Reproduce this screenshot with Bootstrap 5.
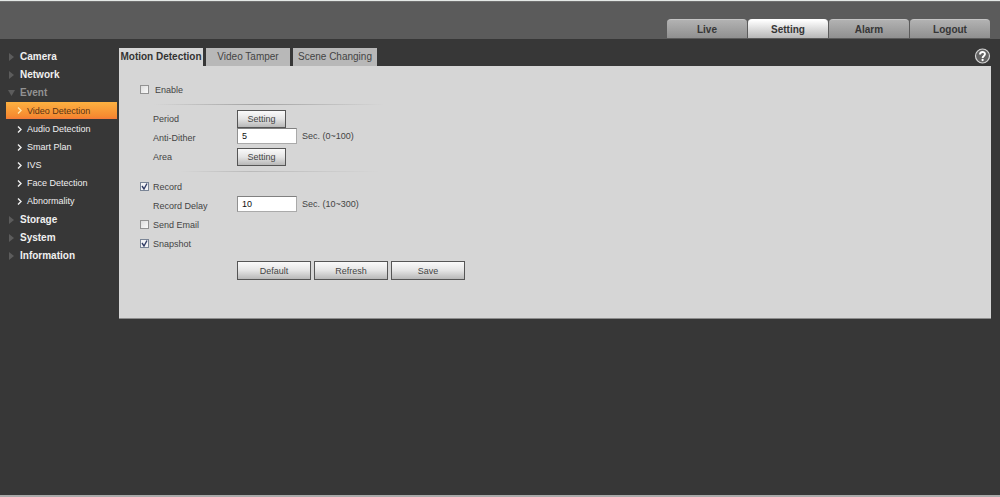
<!DOCTYPE html>
<html lang="en">
<head>
<meta charset="utf-8">
<meta name="viewport" content="width=device-width, initial-scale=1">
<title>Video Detection - Setting</title>
<link href="https://cdn.jsdelivr.net/npm/bootstrap@5.3.0/dist/css/bootstrap.min.css" rel="stylesheet">
<style>
body{background:#373737;color:#444;font:9px/12px "Liberation Sans",Arial,sans-serif;border-top:1px solid #e4e8e6;border-bottom:2px solid #aaa}
a{text-decoration:none}
button{font:inherit;color:inherit}
.topbar{background:#5b5b5b;height:38px;padding:0 10px 1px 0;border-top:1px solid #707070}
.main-tabs{gap:1px}
.main-tabs .nav-link{width:80px;height:19px;padding:0;border-radius:4px 4px 0 0;background:linear-gradient(#b2b2b2,#909090);color:#363636;font-size:10px;font-weight:bold;line-height:19px;text-align:center;border-top:1px solid #c4c4c4}
.main-tabs .nav-link.active{background:linear-gradient(#fff,#b8b8b8);border-color:#fff}
.side{width:119px;padding:9px 2px 0 6px}
.side a{height:18px;color:#f0f0f0}
.side .top-item{font-size:10px;font-weight:bold}
.side .top-item svg{width:7px;height:8px;margin:0 5px 0 2px;fill:#5c5c5c}
.side .top-item.open{color:#929292}
.side .sub-item svg{width:5px;height:7px;margin:0 5px 0 11px;fill:none;stroke:currentColor;stroke-width:1.4}
.side .sub-item.active{height:17px;margin-bottom:1px;background:linear-gradient(#fdb141,#f68a30 85%,#f5793a);color:#5b3515}
.side .sub-item.active svg{stroke:#ffe9b0}
.side .sub-item + .top-item{margin-top:1px}
.content-area{padding:9px 9px 0 0}
.page-tabs{gap:3px}
.page-tabs .nav-link{width:84px;height:18px;padding:0;background:#b8b8b8;color:#444;font-size:10px;line-height:18px;text-align:center;white-space:nowrap}
.page-tabs .nav-link.active{background:#d6d6d6;color:#333;font-weight:bold}
.help{width:17px;height:17px}
.help svg{width:17px;height:17px}
.panel{background:#d6d6d6;padding:14px 0 38px 21px;border-bottom:1px solid #8c8c8c}
.line{height:19px}
.tick{width:13px}
.tick input{width:9px;height:9px;margin:0;appearance:none;background:linear-gradient(135deg,#ddd,#fafafa);border:1px solid #929292}
.tick input:checked{background:url("data:image/svg+xml,%3Csvg xmlns='http://www.w3.org/2000/svg' viewBox='0 0 7 7'%3E%3Cpath d='M1 3l2 3 3-5.500' fill='none' stroke='%23323e66' stroke-width='1.400'/%3E%3C/svg%3E") #f4f4f6;border-color:#7a8596}
.name{width:84px}
.first-label{padding-left:2px}
.pair{gap:5px}
.pair input{width:60px;height:16px;padding:0 4px;border:1px solid #aaa;border-top-color:#808080;border-left-color:#909090;background:#fff;color:#111;font:inherit}
.plain-btn{height:18px;width:49px;padding:0;border:1px solid #555;border-radius:0;background:linear-gradient(#fafafa,#e4e4e4 50%,#b8b8b8)}
.actions{gap:3px;padding:8px 0 0 97px}
.actions .plain-btn{width:74px;height:19px}
.rule{width:230px;height:10px;margin-left:14px;background:linear-gradient(90deg,transparent,#a2a2a2 45%,transparent) center/100% 1px no-repeat}
.rule.faint{width:200px;height:11px;margin-left:40px;background-image:linear-gradient(90deg,transparent,#bababa 35%,transparent)}
</style>
</head>
<body class="d-flex flex-column min-vh-100">
<header class="topbar d-flex justify-content-end align-items-end">
  <nav class="nav main-tabs" aria-label="Main">
    <a class="nav-link" href="#">Live</a>
    <a class="nav-link active" href="#">Setting</a>
    <a class="nav-link" href="#">Alarm</a>
    <a class="nav-link" href="#">Logout</a>
  </nav>
</header>
<div class="d-flex flex-grow-1">
  <nav class="side d-flex flex-column flex-shrink-0" aria-label="Settings">
    <a class="top-item d-flex align-items-center" href="#"><svg viewBox="0 0 7 8"><path d="M1 0l5 4-5 4z"/></svg>Camera</a>
    <a class="top-item d-flex align-items-center" href="#"><svg viewBox="0 0 7 8"><path d="M1 0l5 4-5 4z"/></svg>Network</a>
    <a class="top-item open d-flex align-items-center" href="#"><svg viewBox="0 0 7 8"><path d="M0 1h7L3.500 7z"/></svg>Event</a>
    <a class="sub-item active d-flex align-items-center" href="#"><svg viewBox="0 0 5 7"><path d="M1 .5l3 3-3 3"/></svg>Video Detection</a>
    <a class="sub-item d-flex align-items-center" href="#"><svg viewBox="0 0 5 7"><path d="M1 .5l3 3-3 3"/></svg>Audio Detection</a>
    <a class="sub-item d-flex align-items-center" href="#"><svg viewBox="0 0 5 7"><path d="M1 .5l3 3-3 3"/></svg>Smart Plan</a>
    <a class="sub-item d-flex align-items-center" href="#"><svg viewBox="0 0 5 7"><path d="M1 .5l3 3-3 3"/></svg>IVS</a>
    <a class="sub-item d-flex align-items-center" href="#"><svg viewBox="0 0 5 7"><path d="M1 .5l3 3-3 3"/></svg>Face Detection</a>
    <a class="sub-item d-flex align-items-center" href="#"><svg viewBox="0 0 5 7"><path d="M1 .5l3 3-3 3"/></svg>Abnormality</a>
    <a class="top-item d-flex align-items-center" href="#"><svg viewBox="0 0 7 8"><path d="M1 0l5 4-5 4z"/></svg>Storage</a>
    <a class="top-item d-flex align-items-center" href="#"><svg viewBox="0 0 7 8"><path d="M1 0l5 4-5 4z"/></svg>System</a>
    <a class="top-item d-flex align-items-center" href="#"><svg viewBox="0 0 7 8"><path d="M1 0l5 4-5 4z"/></svg>Information</a>
  </nav>
  <main class="content-area flex-grow-1">
    <div class="d-flex justify-content-between">
      <nav class="nav page-tabs" aria-label="Detection">
        <a class="nav-link active" href="#">Motion Detection</a>
        <a class="nav-link" href="#">Video Tamper</a>
        <a class="nav-link" href="#">Scene Changing</a>
      </nav>
      <a class="help d-flex" href="#" aria-label="Help"><svg viewBox="0 0 17 17"><circle cx="8.500" cy="8" r="7" fill="#626262" stroke="#d4d4d4" stroke-width="1.200"/><path d="M6 6.400C6 3.300 11 3.300 11 6.100c0 1.900-2.400 1.800-2.400 3.900" fill="none" stroke="#fff" stroke-width="1.900"/><circle cx="8.600" cy="12" r="1.150" fill="#fff"/></svg></a>
    </div>
    <form class="panel">
      <div class="line d-flex align-items-center"><span class="tick d-flex"><input type="checkbox" id="enable"></span><label for="enable" class="first-label">Enable</label></div>
      <div class="rule"></div>
      <div class="line d-flex align-items-center"><span class="tick"></span><span class="name">Period</span><button type="button" class="plain-btn">Setting</button></div>
      <div class="line d-flex align-items-center"><span class="tick"></span><label class="name" for="dither">Anti-Dither</label><span class="pair d-flex align-items-center align-self-start"><input type="text" id="dither" value="5"><span>Sec. (0~100)</span></span></div>
      <div class="line d-flex align-items-center"><span class="tick"></span><span class="name">Area</span><button type="button" class="plain-btn">Setting</button></div>
      <div class="rule faint"></div>
      <div class="line d-flex align-items-center"><span class="tick d-flex"><input type="checkbox" id="record" checked></span><label for="record">Record</label></div>
      <div class="line d-flex align-items-center"><span class="tick"></span><label class="name" for="delay">Record Delay</label><span class="pair d-flex align-items-center align-self-start"><input type="text" id="delay" value="10"><span>Sec. (10~300)</span></span></div>
      <div class="line d-flex align-items-center"><span class="tick d-flex"><input type="checkbox" id="email"></span><label for="email">Send Email</label></div>
      <div class="line d-flex align-items-center"><span class="tick d-flex"><input type="checkbox" id="snapshot" checked></span><label for="snapshot">Snapshot</label></div>
      <div class="actions d-flex">
        <button type="button" class="plain-btn">Default</button>
        <button type="button" class="plain-btn">Refresh</button>
        <button type="button" class="plain-btn">Save</button>
      </div>
    </form>
  </main>
</div>
<script src="https://cdn.jsdelivr.net/npm/bootstrap@5.3.0/dist/js/bootstrap.bundle.min.js"></script>
</body>
</html>
